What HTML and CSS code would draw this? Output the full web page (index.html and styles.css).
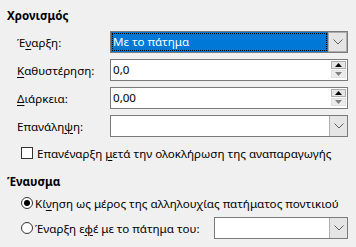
FILE: index.html
```html
<!DOCTYPE html>
<html lang="el">
<head>
    <meta charset="UTF-8">
    <meta name="viewport" content="width=device-width, initial-scale=1.0">
    <title>Χρονισμός</title>
    <link rel="stylesheet" href="styles.css">
</head>
<body>
    <div class="panel">
        <div class="title">Χρονισμός</div>
        <div class="grid">
            <span class="label">Έ<u>ν</u>αρξη:</span>
            <div class="combo focused">
                <span class="value"><span class="focus">Με το πάτημα</span></span>
                <span class="drop"><svg width="10" height="6" viewBox="0 0 10 6"><polyline points="0.5,0.5 5,5 9.5,0.5" fill="none" stroke="#606060" stroke-width="1"/></svg></span>
            </div>

            <span class="label"><u>Κ</u>αθυστέρηση:</span>
            <div class="spin">
                <span class="value">0,0</span>
                <span class="arrows">
                    <span class="up"><svg width="7" height="4" viewBox="0 0 7 4"><polygon points="0,4 3.5,0 7,4" fill="#000"/></svg></span>
                    <span class="down"><svg width="7" height="4" viewBox="0 0 7 4"><polygon points="0,0 3.5,4 7,0" fill="#808080"/></svg></span>
                </span>
            </div>

            <span class="label"><u>Δ</u>ιάρκεια:</span>
            <div class="spin">
                <span class="value">0,00</span>
                <span class="arrows">
                    <span class="up"><svg width="7" height="4" viewBox="0 0 7 4"><polygon points="0,4 3.5,0 7,4" fill="#000"/></svg></span>
                    <span class="down"><svg width="7" height="4" viewBox="0 0 7 4"><polygon points="0,0 3.5,4 7,0" fill="#808080"/></svg></span>
                </span>
            </div>

            <span class="label">Επανάλη<u>ψ</u>η:</span>
            <div class="combo">
                <span class="value"></span>
                <span class="drop"><svg width="10" height="6" viewBox="0 0 10 6"><polyline points="0.5,0.5 5,5 9.5,0.5" fill="none" stroke="#606060" stroke-width="1"/></svg></span>
            </div>
        </div>

        <div class="check-row">
            <span class="checkbox"></span>
            <span>Επανέναρξη <u>μ</u>ετά την ολοκλήρωση της αναπαραγωγής</span>
        </div>

        <div class="title second">Έναυσμα</div>

        <div class="radio-row first">
            <span class="radio checked"></span>
            <span>Κί<u>ν</u>ηση ως μέρος της αλληλουχίας πατήματος ποντικιού</span>
        </div>
        <div class="radio-row">
            <span class="radio"></span>
            <span>Έναρξη ε<u>φ</u>έ με το πάτημα του:</span>
            <div class="combo small">
                <span class="value"></span>
                <span class="drop"><svg width="10" height="6" viewBox="0 0 10 6"><polyline points="0.5,0.5 5,5 9.5,0.5" fill="none" stroke="#606060" stroke-width="1"/></svg></span>
            </div>
        </div>
    </div>
</body>
</html>
```

FILE: styles.css
```css
body {
    margin: 0;
    background-color: #f0f0f0;
    font-family: "Noto Sans", "Liberation Sans", sans-serif;
    font-size: 11.6px;
    color: #000;
}

u {
    text-decoration-thickness: 1px;
    text-underline-offset: 2px;
}

.panel {
    padding: 8px 8px 0 7px;
    white-space: nowrap;
}

.title {
    font-weight: bold;
    height: 16px;
    line-height: 16px;
}
.title.second {
    margin-top: 13px;
}

.grid {
    display: grid;
    grid-template-columns: 93px 1fr;
    grid-auto-rows: 22px;
    row-gap: 6px;
    margin: 7px 0 0 10px;
    align-items: center;
}

.combo, .spin {
    display: flex;
    height: 22px;
    box-sizing: border-box;
    border: 1px solid #7a7a7a;
    background-color: #fff;
}
.value {
    flex: 1;
    padding-left: 2px;
    line-height: 20px;
    white-space: nowrap;
}
.drop {
    width: 17px;
    display: flex;
    align-items: center;
    justify-content: center;
    background-color: #e5e5e5;
    border-left: 1px solid #adadad;
}

.combo.focused .value {
    background-color: #0078d7;
    color: #fff;
    padding: 1px;
}
.combo.focused .focus {
    display: block;
    height: 18px;
    line-height: 18px;
    padding-left: 1px;
    outline: 1px dotted #000;
    outline-offset: -1px;
}
.combo.focused .drop {
    border: 1px solid #adadad;
    background-color: #e5e5e5;
}

.arrows {
    width: 15px;
    display: flex;
    flex-direction: column;
    padding: 1px 1px 2px 0;
    gap: 1px;
}
.arrows span {
    flex: 1;
    display: flex;
    align-items: center;
    justify-content: center;
}
.arrows .up {
    background-color: #e5e5e5;
    border: 1px solid #adadad;
}
.arrows .down {
    background-color: #ececec;
    border: 1px solid #e0e0e0;
}

.check-row, .radio-row {
    display: flex;
    align-items: center;
    height: 16px;
    margin-left: 14px;
}
.check-row {
    margin-top: 8px;
}
.checkbox {
    width: 12px;
    height: 12px;
    box-sizing: border-box;
    border: 1px solid #333;
    background-color: #fff;
    margin-right: 4px;
}

.radio-row {
    margin-top: 6px;
    height: 22px;
}
.radio-row.first {
    margin-top: 5px;
    height: 16px;
}
.radio {
    width: 12px;
    height: 12px;
    box-sizing: border-box;
    border: 1px solid #333;
    border-radius: 50%;
    background-color: #fff;
    margin-right: 2px;
    display: flex;
    align-items: center;
    justify-content: center;
}
.radio.checked::after {
    content: "";
    width: 6px;
    height: 6px;
    border-radius: 50%;
    background-color: #000;
}

.combo.small {
    width: 134px;
    margin-left: auto;
}
```
